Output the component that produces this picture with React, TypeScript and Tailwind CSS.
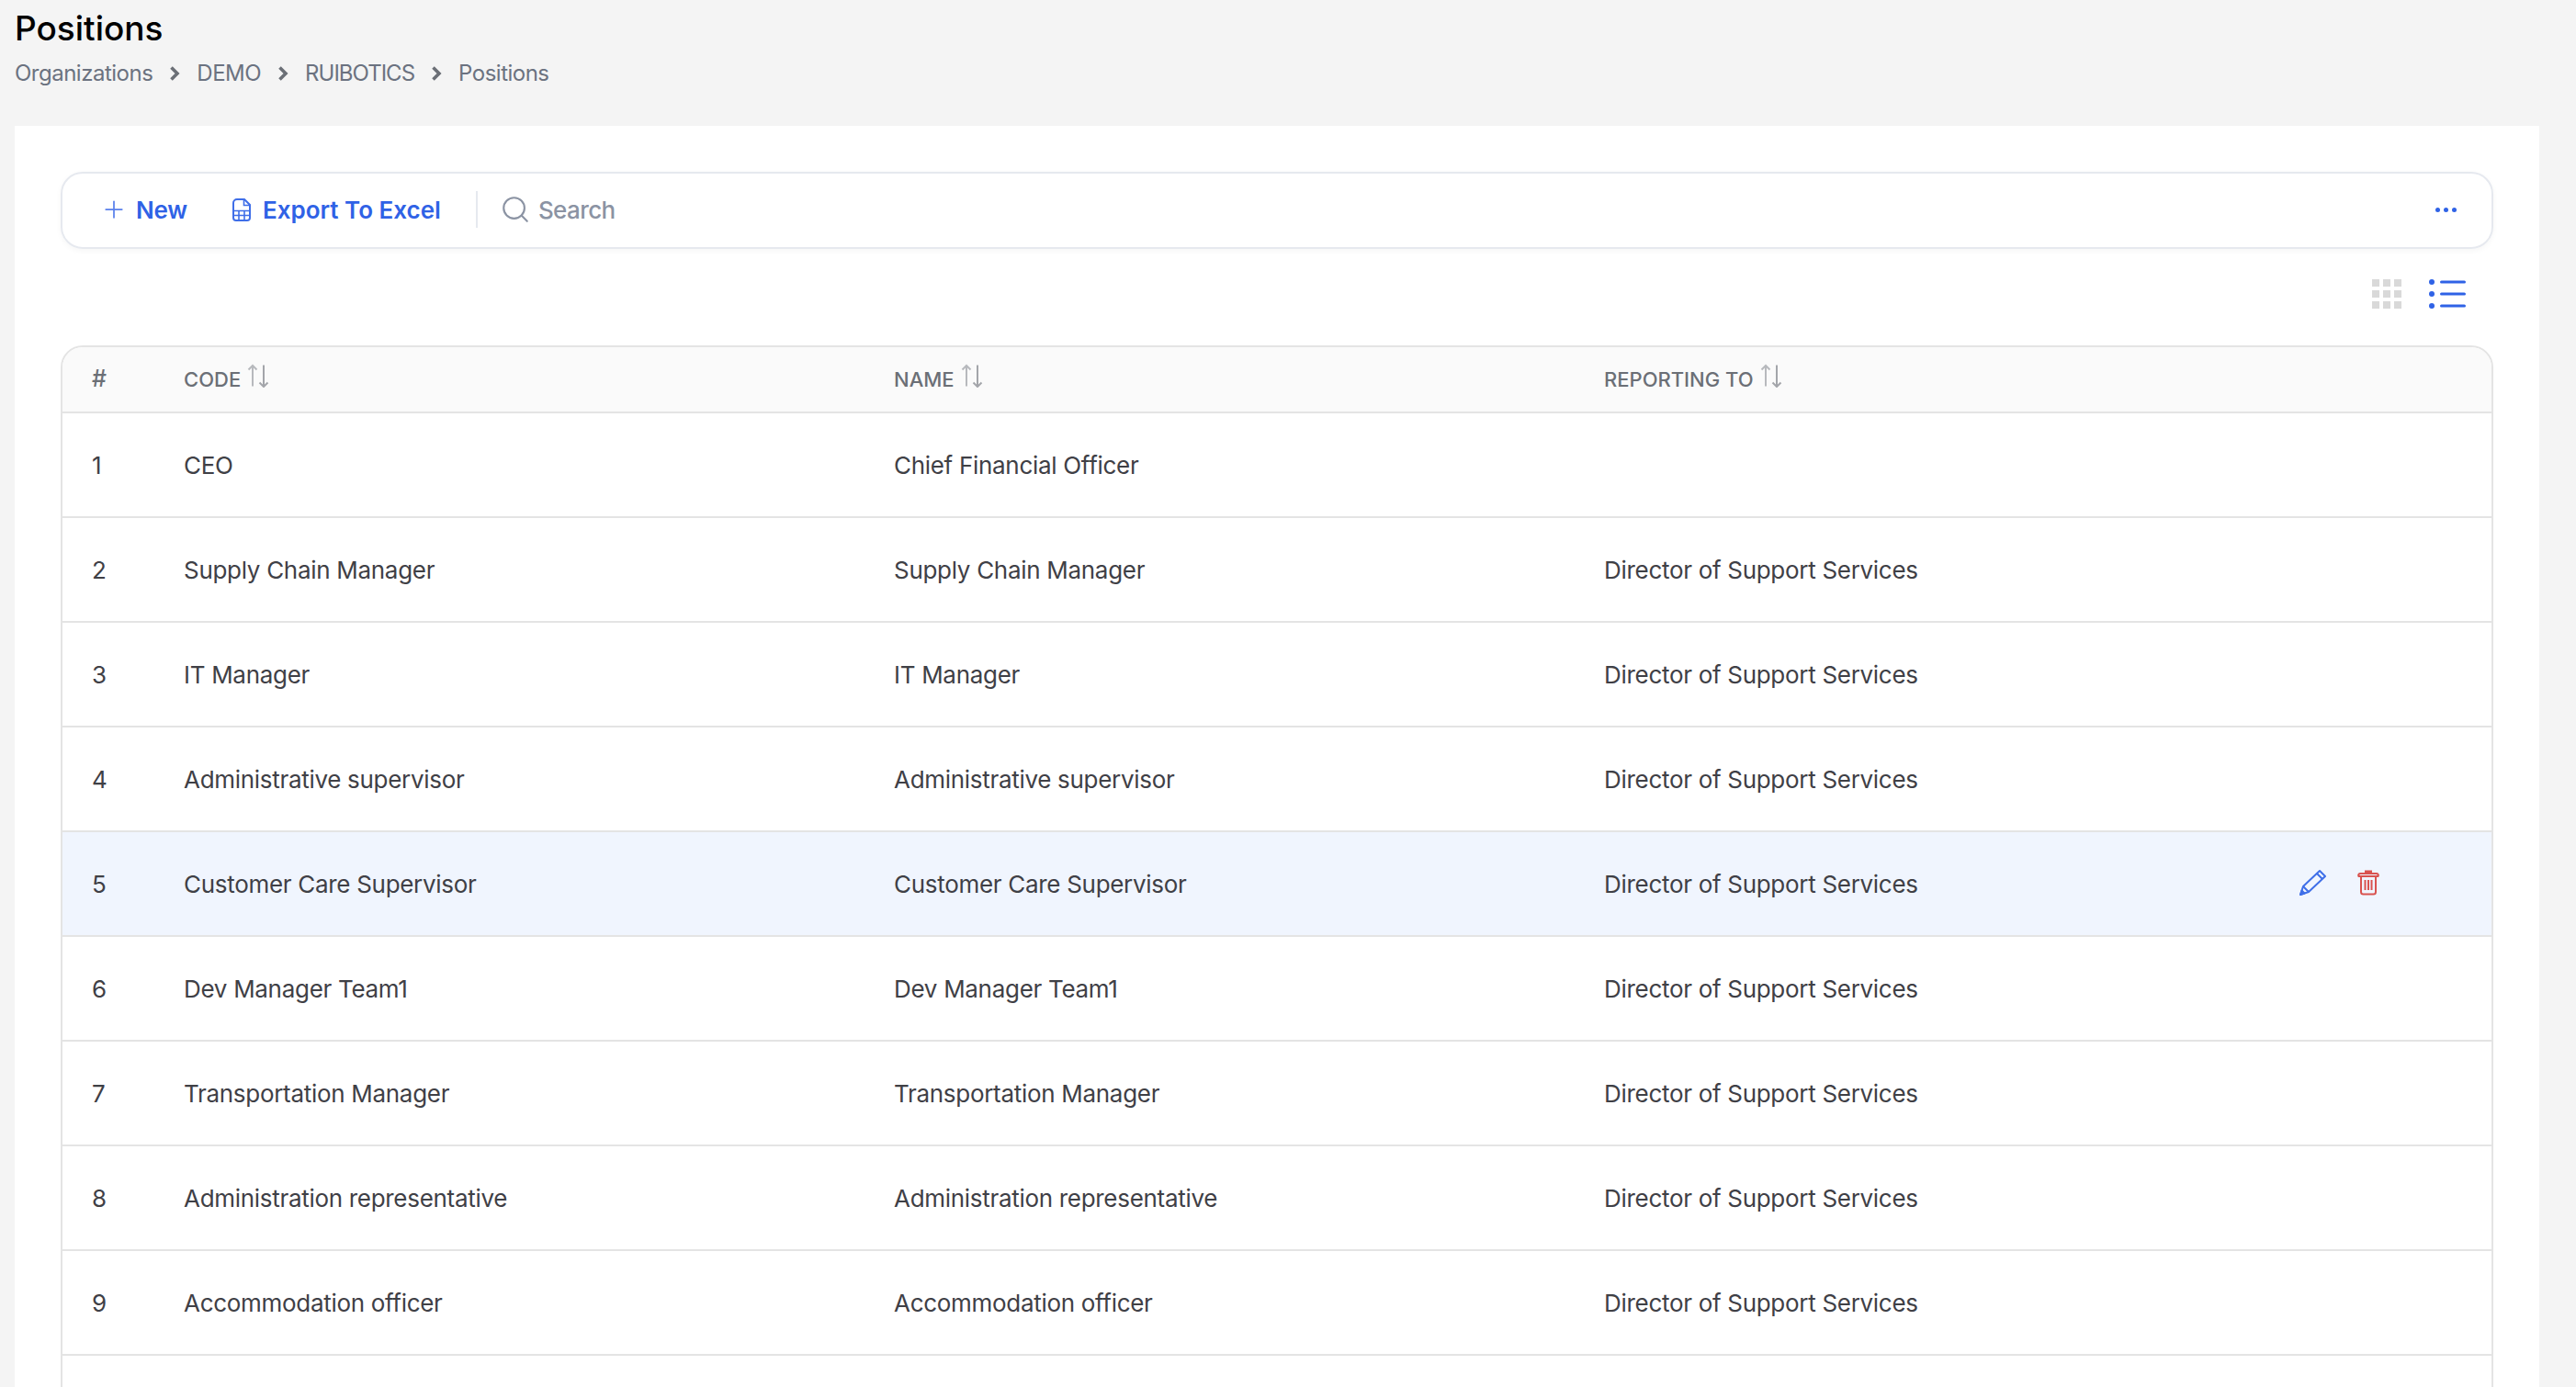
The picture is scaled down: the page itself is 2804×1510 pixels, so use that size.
import { Plus, Search } from 'lucide-react';

const rows = [
  { code: 'CEO', name: 'Chief Financial Officer', reporting: '' },
  { code: 'Supply Chain Manager', name: 'Supply Chain Manager', reporting: 'Director of Support Services' },
  { code: 'IT Manager', name: 'IT Manager', reporting: 'Director of Support Services' },
  { code: 'Administrative supervisor', name: 'Administrative supervisor', reporting: 'Director of Support Services' },
  { code: 'Customer Care Supervisor', name: 'Customer Care Supervisor', reporting: 'Director of Support Services' },
  { code: 'Dev Manager Team1', name: 'Dev Manager Team1', reporting: 'Director of Support Services' },
  { code: 'Transportation Manager', name: 'Transportation Manager', reporting: 'Director of Support Services' },
  { code: 'Administration representative', name: 'Administration representative', reporting: 'Director of Support Services' },
  { code: 'Accommodation officer', name: 'Accommodation officer', reporting: 'Director of Support Services' },
];

const crumbs = ['Organizations', 'DEMO', 'RUIBOTICS', 'Positions'];

const Chevron = () => (
  <svg width="12" height="16" viewBox="0 0 12 16" fill="none" className="shrink-0">
    <path d="M2.5 1.5 L9 8 L2.5 14.5" stroke="#6b6f76" strokeWidth="3.6" />
  </svg>
);

const ExcelIcon = () => (
  <svg width="20" height="25" viewBox="0 0 20 25" fill="none" stroke="#3f6ee8" strokeWidth="2">
    <path d="M5 1 H13 L19 7 V21 a3 3 0 0 1 -3 3 H4 a3 3 0 0 1 -3 -3 V5 a4 4 0 0 1 4 -4 Z" />
    <path d="M12.5 1 V7.5 H19" strokeWidth="1.6" />
    <path d="M1 13.5 H19 M1 18.5 H19 M7 13.5 V24 M13 13.5 V24" strokeWidth="1.6" />
  </svg>
);

const SortIcon = () => (
  <svg width="24" height="26" viewBox="0 0 24 26" fill="none" strokeWidth="2" className="ml-[7px] -translate-y-1">
    <path d="M6 24.5 V2 M1.5 6.5 L6 2 L10.5 6.5" stroke="#b7b9bd" />
    <path d="M18 1.5 V25 M13.5 20.5 L18 25 L22.5 20.5" stroke="#a3a5aa" />
  </svg>
);

const GridIcon = () => (
  <div className="grid grid-cols-3 gap-x-[4px] gap-y-[4px] mt-[1px]">
    {Array.from({ length: 9 }).map((_, i) => (
      <div key={i} className="w-[8px] h-[8px] bg-[#d9d9d9]" />
    ))}
  </div>
);

const ListIcon = () => (
  <svg width="40" height="34" viewBox="0 0 40 34" fill="#2f62e6">
    <circle cx="3" cy="4" r="3" />
    <circle cx="3" cy="17" r="3" />
    <circle cx="3" cy="30" r="3" />
    <rect x="12" y="2.5" width="28" height="3" rx="1.5" />
    <rect x="12" y="15.5" width="28" height="3" rx="1.5" />
    <rect x="12" y="28.5" width="28" height="3" rx="1.5" />
  </svg>
);

const PencilIcon = () => (
  <svg width="30" height="30" viewBox="0 0 30 30" fill="none" stroke="#3f6fe8" strokeWidth="2" strokeLinejoin="round">
    <path d="M2 28 L5 19 L23 2 L29 8 L11 25 Z" />
    <path d="M5 19 L11 25 M20 5 L26 11" />
    <path d="M2 28 L3.5 23.5 L6.5 26.5 Z" fill="#3f6fe8" />
  </svg>
);

const TrashIcon = () => (
  <svg width="24" height="28" viewBox="0 0 24 28" fill="none" stroke="#d9534f" strokeWidth="2">
    <path d="M1.5 7 a2 2 0 0 1 2 -3 H20.5 a2 2 0 0 1 2 3 Z" />
    <path d="M9 3.5 V1.5 H15 V3.5" fill="#d9534f" />
    <path d="M4 7 V24 a2.5 2.5 0 0 0 2.5 2.5 H17.5 a2.5 2.5 0 0 0 2.5 -2.5 V7" />
    <path d="M8.5 11 V22 M12 11 V22 M15.5 11 V22" />
  </svg>
);

const cols = 'grid grid-cols-[100px_773px_773px_773px_1fr] items-center';

export default function App() {
  return (
    <div className="h-screen overflow-hidden bg-[#f4f4f4] font-['Inter',sans-serif] text-[#3f4046]">
      <div className="px-4 pt-[12px] h-[137px]">
        <h1 className="text-[37px] leading-[38px] font-medium text-black">Positions</h1>
        <div className="flex items-center mt-[14px] text-[24px] leading-[32px] tracking-[-0.5px] text-[#6b7280]">
          {crumbs.map((c, i) => (
            <div key={c} className="flex items-center">
              <span className={c === 'RUIBOTICS' ? 'tracking-[-1px]' : ''}>{c}</span>
              {i < crumbs.length - 1 && <span className="mx-[18px]"><Chevron /></span>}
            </div>
          ))}
        </div>
      </div>

      <div className="ml-4 w-[2748px] h-[1373px] bg-white px-[50px] pt-[50px] overflow-hidden">
        <div className="flex items-center h-[84px] pb-[2px] border-2 border-[#e6e9ef] rounded-[24px] shadow-[0_2px_6px_rgba(0,0,0,0.04)] pl-[41px] pr-[38px]">
          <button className="flex items-center text-[#2f62e6] text-[26px] font-semibold tracking-[-0.2px]">
            <Plus size={30} strokeWidth={1.4} className="text-[#5a80ec] mr-[9px]" />
            New
          </button>
          <button className="flex items-center text-[#2f62e6] text-[26px] font-semibold ml-[49px]">
            <span className="mr-[13px]"><ExcelIcon /></span>
            Export To Excel
          </button>
          <div className="w-[2px] h-[40px] bg-[#e6e9ef] ml-[38px] mr-[24px]" />
          <Search size={34} strokeWidth={1.5} className="text-[#8b93a3] mr-[8px]" />
          <span className="text-[26px] font-medium tracking-[-0.6px] text-[#8b93a3]">Search</span>
          <div className="ml-auto flex gap-[4px]">
            <div className="w-[5px] h-[5px] rounded-full bg-[#2f62e6]" />
            <div className="w-[5px] h-[5px] rounded-full bg-[#2f62e6]" />
            <div className="w-[5px] h-[5px] rounded-full bg-[#2f62e6]" />
          </div>
        </div>

        <div className="flex items-start justify-end h-[105px] pt-[32px] pr-[30px] gap-[30px]">
          <GridIcon />
          <ListIcon />
        </div>

        <div className="border-2 border-[#e4e4e4] rounded-[24px] overflow-hidden">
          <div className={`${cols} h-[70px] bg-[#fafafa] text-[22px] font-medium text-[#6b6f76]`}>
            <div className="pl-[32px] text-[25px]">#</div>
            <div className="pl-[32px] flex items-center">CODE<SortIcon /></div>
            <div className="pl-[32px] flex items-center">NAME<SortIcon /></div>
            <div className="pl-[32px] flex items-center">REPORTING TO<SortIcon /></div>
          </div>
          {rows.map((row, i) => (
            <div
              key={i}
              className={`${cols} h-[114px] border-t-2 border-[#e4e4e4] text-[26px] tracking-[-0.3px] ${i === 4 ? 'bg-[#f0f5fe]' : 'bg-white'}`}
            >
              <div className="pl-[32px]">{i + 1}</div>
              <div className="pl-[32px]">{row.code}</div>
              <div className="pl-[32px]">{row.name}</div>
              <div className="pl-[32px]">{row.reporting}</div>
              {i === 4 && (
                <div className="flex items-center gap-[34px] pl-[15px] -translate-y-[1px]">
                  <PencilIcon />
                  <TrashIcon />
                </div>
              )}
            </div>
          ))}
          <div className="h-[114px] border-t-2 border-[#e4e4e4]" />
        </div>
      </div>
    </div>
  );
}
